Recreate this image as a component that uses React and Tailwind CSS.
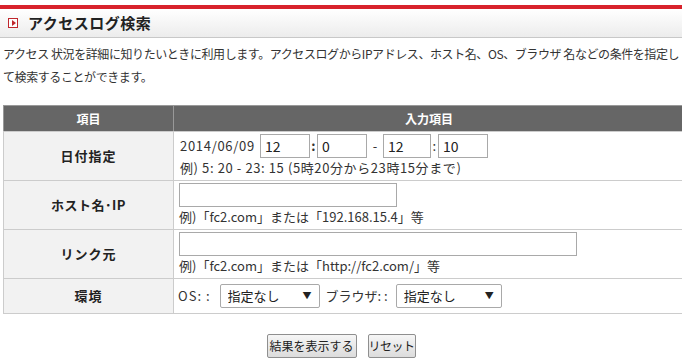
import React from "react";

function Sel({ w }) {
  return (
    <span className="relative inline-block">
      <select className={`appearance-none ${w} h-[24px] border border-[#a9a9a9] rounded-[2px] bg-white pl-[7px] text-[13px] text-[#222] outline-none`}>
        <option>指定なし</option>
      </select>
      <span className="absolute right-[8px] top-[5px] text-[9px] text-[#222] pointer-events-none">▼</span>
    </span>
  );
}

function Inp({ w, v }) {
  return (
    <input
      defaultValue={v}
      className={`${w} h-[24px] border border-[#a9a9a9] bg-white px-[4px] text-[14px] text-[#222] outline-none`}
    />
  );
}

export default function App() {
  return (
    <div className="w-[682px] h-[363px] overflow-hidden bg-white text-[#333] font-['Noto_Sans_CJK_JP',sans-serif]">
      <div className="h-[5px]" />
      <div className="h-[4px] bg-[#d8222c]" />
      <div className="h-[29px] bg-gradient-to-b from-[#ffffff] to-[#ececec] border-b border-[#c8c8c8] flex items-center pl-[8px]">
        <span className="w-[10px] h-[10px] border border-[#c0272d] bg-white flex items-center justify-center mr-[10px]">
          <span className="w-0 h-0 border-y-[3px] border-y-transparent border-l-[4px] border-l-[#c0272d] ml-[1px]" />
        </span>
        <span className="text-[15px] font-bold text-[#222] tracking-[0.5px]">アクセスログ検索</span>
      </div>
      <p className="mt-[4px] ml-[3px] text-[12px] leading-[23px] text-[#333] whitespace-nowrap tracking-[-0.42px]">
        アクセス 状況を詳細に知りたいときに利用します。アクセスログからIPアドレス、ホスト名、OS、ブラウザ 名などの条件を指定し<br />
        て検索することができます。
      </p>
      <table className="ml-[3px] mt-[17px] w-[682px] border-collapse text-[13px]">
        <colgroup>
          <col className="w-[170px]" />
          <col />
        </colgroup>
        <thead>
          <tr className="h-[26px] bg-[#666666] text-white">
            <th className="border border-[#999] border-b-[#ccc] font-bold text-[12px]">項目</th>
            <th className="border border-[#999] border-b-[#ccc] font-bold text-[12px]">入力項目</th>
          </tr>
        </thead>
        <tbody>
          <tr className="h-[49px]">
            <th className="border border-[#ccc] bg-[#f2f2f2] text-[13px] font-bold text-[#222] tracking-[1px]">日付指定</th>
            <td className="border border-[#ccc] px-[6px] py-[2px] align-middle">
              <div className="flex items-center">
                <span className="mr-[5px] tracking-[0.7px]">2014/06/09</span>
                <Inp w="w-[50px]" v="12" />
                <span className="w-[7px] text-center font-bold">:</span>
                <Inp w="w-[50px]" v="0" />
                <span className="w-[16px] text-center">-</span>
                <Inp w="w-[48px]" v="12" />
                <span className="w-[7px] text-center">:</span>
                <Inp w="w-[50px]" v="10" />
              </div>
              <div className="leading-[20px] tracking-[0.6px]">例) 5: 20 - 23: 15 (5時20分から23時15分まで)</div>
            </td>
          </tr>
          <tr className="h-[48px]">
            <th className="border border-[#ccc] bg-[#f2f2f2] text-[13px] font-bold text-[#222] tracking-[0.5px]">ホスト名･IP</th>
            <td className="border border-[#ccc] px-[5px] py-[2px]">
              <Inp w="w-[218px] block" v="" />
              <div className="leading-[20px]">例)「fc2.com」または「192.168.15.4」等</div>
            </td>
          </tr>
          <tr className="h-[49px]">
            <th className="border border-[#ccc] bg-[#f2f2f2] text-[13px] font-bold text-[#222] tracking-[1px]">リンク元</th>
            <td className="border border-[#ccc] px-[5px] py-[2px]">
              <Inp w="w-[398px] block" v="" />
              <div className="leading-[20px]">例)「fc2.com」または「http://fc2.com/」等</div>
            </td>
          </tr>
          <tr className="h-[35px]">
            <th className="border border-[#ccc] bg-[#f2f2f2] text-[13px] font-bold text-[#222] tracking-[1px]">環境</th>
            <td className="border border-[#ccc] px-[4px]">
              <div className="flex items-center">
                <span className="mr-[9px] tracking-[1px]">OS: :</span>
                <Sel w="w-[100px]" />
                <span className="ml-[6px] mr-[8px]">ブラウザ: :</span>
                <Sel w="w-[106px]" />
              </div>
            </td>
          </tr>
        </tbody>
      </table>
      <div className="flex justify-center gap-[11px] mt-[20px]">
        <button className="w-[90px] h-[24px] px-0 border border-[#8f8f8f] rounded-[2px] bg-gradient-to-b from-[#f6f6f6] to-[#dcdcdc] text-[12px] text-[#222]">結果を表示する</button>
        <button className="w-[48px] h-[24px] px-0 border border-[#8f8f8f] rounded-[2px] bg-gradient-to-b from-[#f6f6f6] to-[#dcdcdc] text-[12px] tracking-[-0.5px] text-[#222]">リセット</button>
      </div>
    </div>
  );
}
